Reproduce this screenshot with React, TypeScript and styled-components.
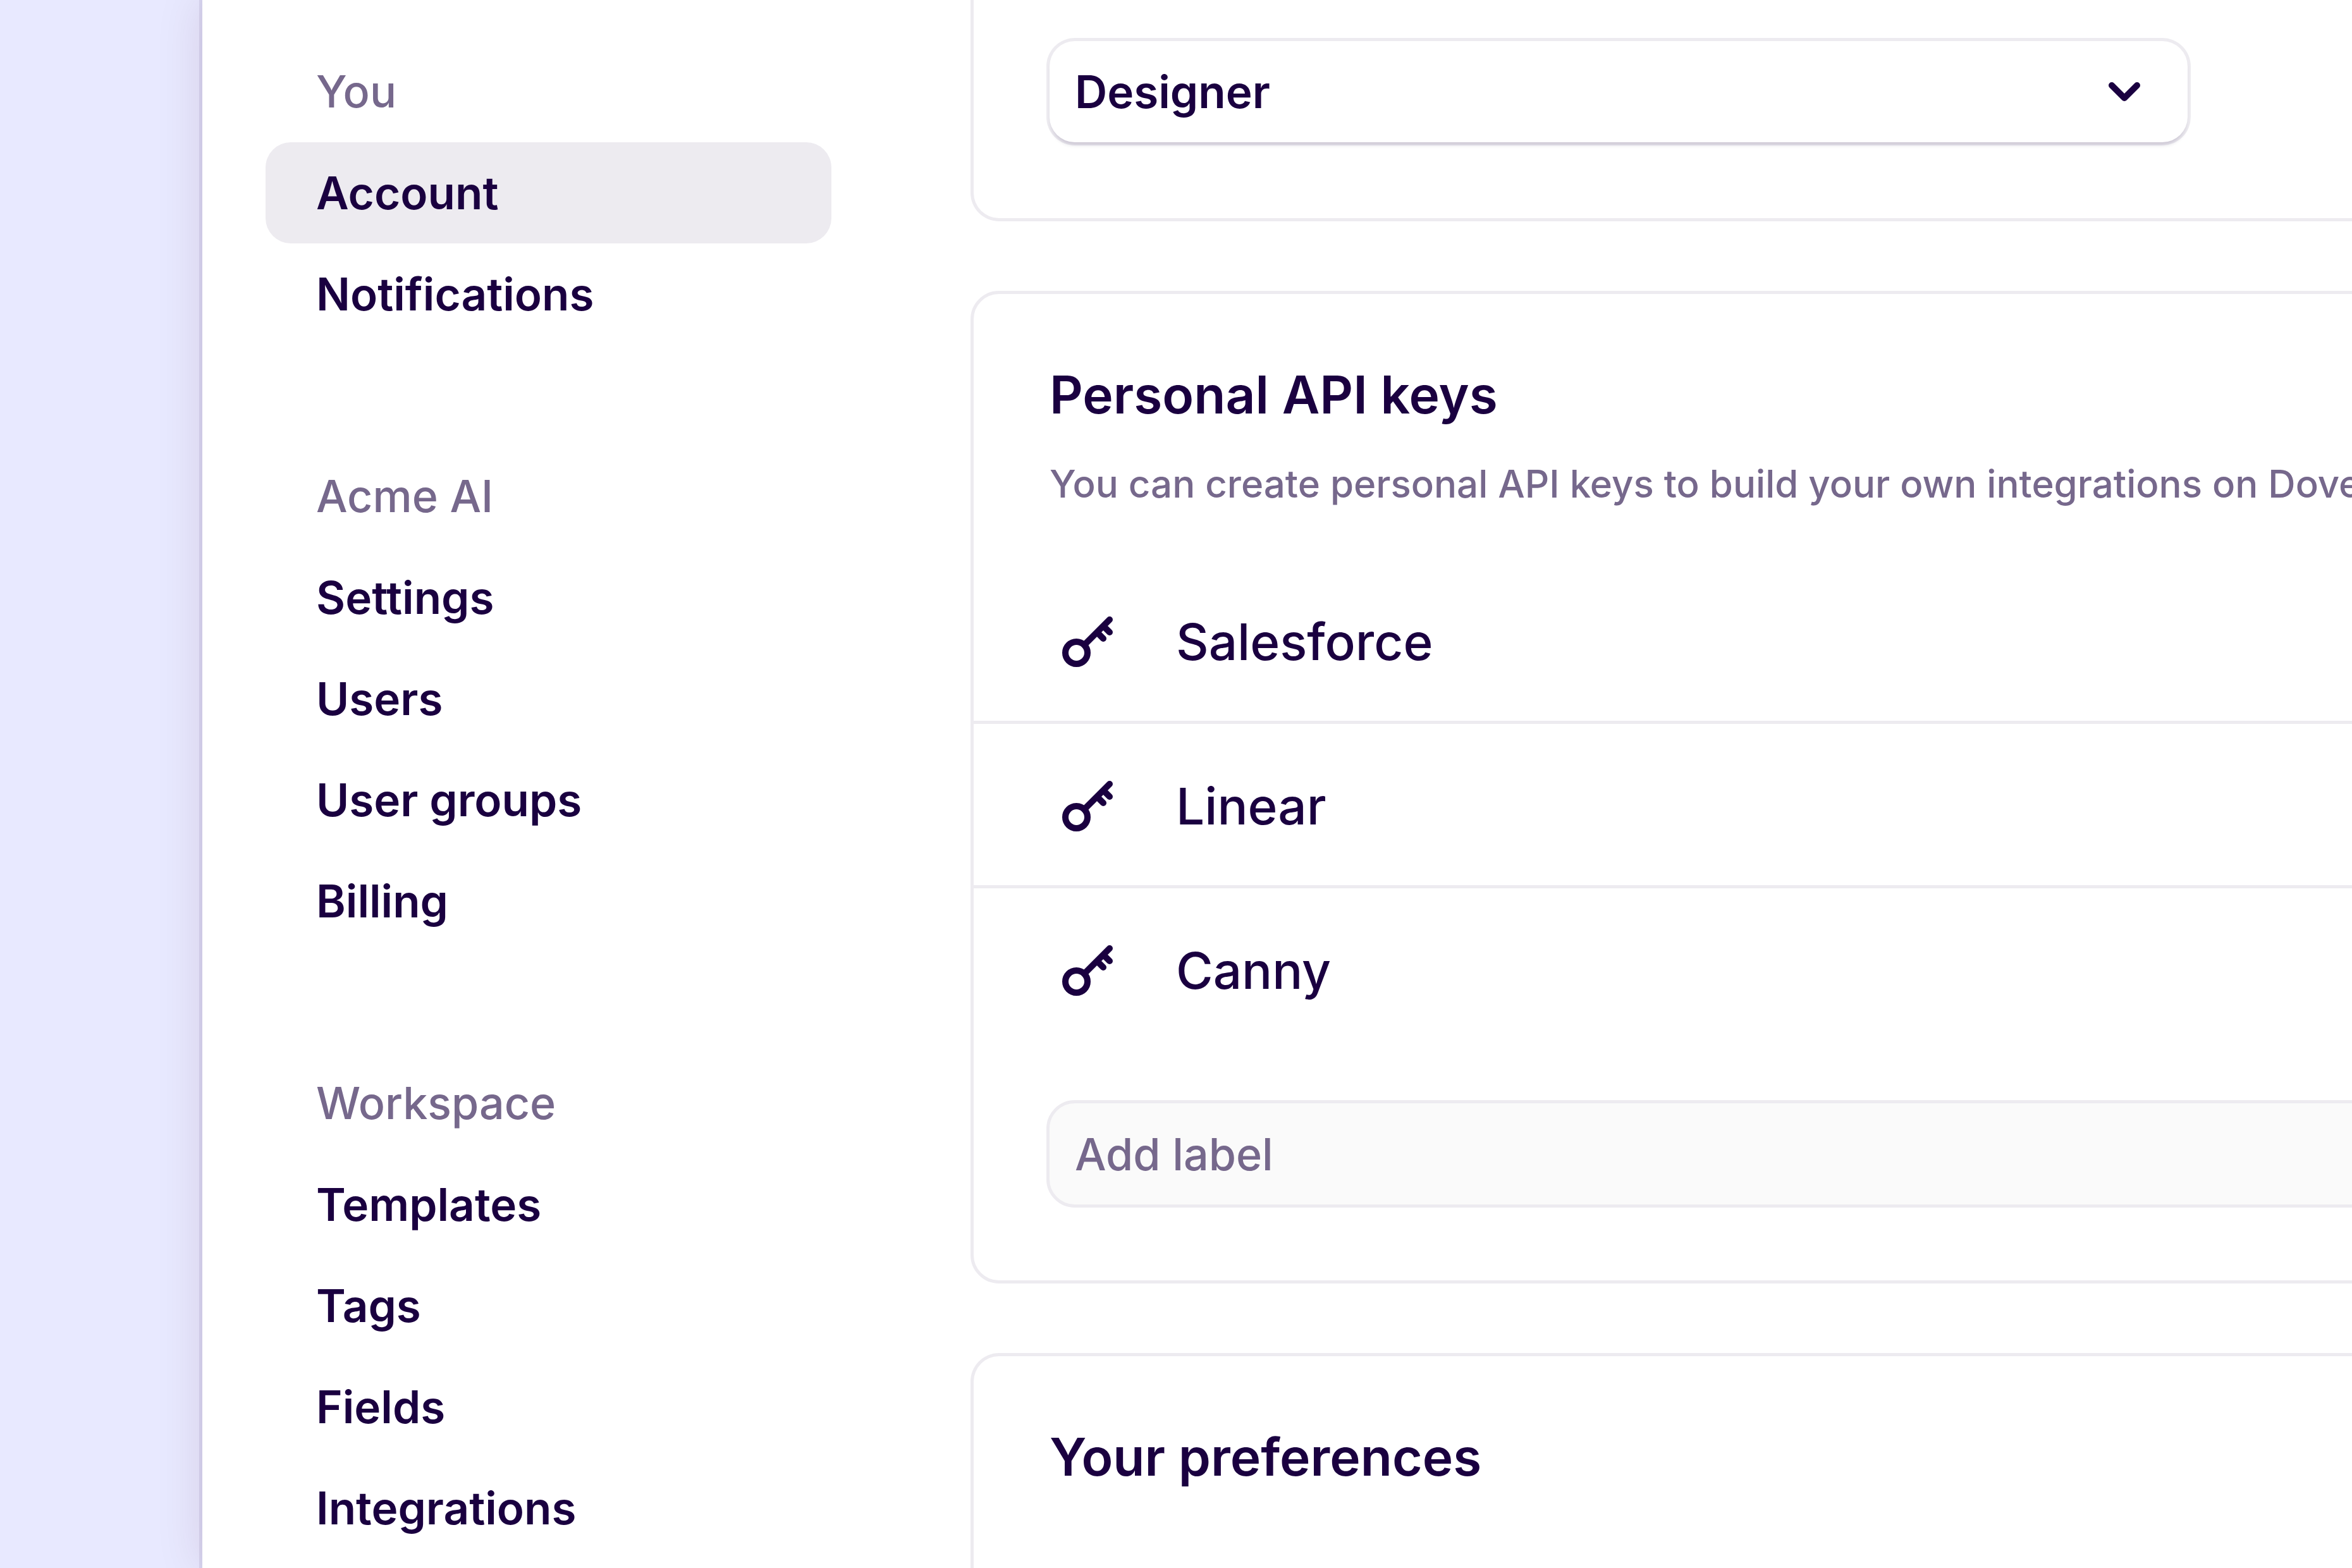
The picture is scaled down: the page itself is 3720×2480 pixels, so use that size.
import React from "react";
import styled, { createGlobalStyle } from "styled-components";

const GlobalStyle = createGlobalStyle`
  *, *::before, *::after { box-sizing: border-box; }
  html, body { margin: 0; height: 100%; overflow: hidden; }
  #root { height: 100%; }
  body {
    background: #e8e9ff;
    color: #1a0040;
    font-family: Inter, "Liberation Sans", sans-serif;
    font-optical-sizing: none;
    font-size: 70px;
    line-height: 100px;
    -webkit-font-smoothing: antialiased;
  }
`;

const Shell = styled.div`
  display: flex;
  height: 100%;
  padding-left: 320px;
  overflow: hidden;
`;

const Window = styled.div`
  flex: 1;
  min-width: 0;
  display: flex;
  gap: 220px;
  padding-left: 100px;
  background: #ffffff;
  box-shadow: 0 0 0 5px rgba(26, 0, 80, 0.08), 0 0 70px rgba(80, 0, 40, 0.12);
`;

const Sidebar = styled.nav`
  flex: none;
  width: 895px;
  display: flex;
  flex-direction: column;
  gap: 160px;
  padding-top: 65px;
`;

const NavGroup = styled.section`
  display: flex;
  flex-direction: column;
`;

const NavTitle = styled.h2`
  margin: 0;
  padding: 30px 80px;
  font-size: 70px;
  font-weight: 500;
  color: #76688c;
`;

const NavLink = styled.a<{ $active?: boolean }>`
  padding: 30px 80px;
  border-radius: 40px;
  background: ${({ $active }) => ($active ? "#edebf0" : "transparent")};
  font-size: 71px;
  font-weight: 600;
  color: inherit;
  text-decoration: none;
`;

const Content = styled.main`
  flex: 1 0 3000px;
  display: flex;
  flex-direction: column;
  gap: 110px;
`;

const Card = styled.section`
  display: flex;
  flex-direction: column;
  padding: 110px 0 115px;
  border: 5px solid #edebf0;
  border-radius: 45px;
`;

const UpperCard = styled(Card)`
  padding-top: 60px;
  border-top: none;
  border-radius: 0 0 45px 45px;
`;

const LowerCard = styled(Card)`
  flex: 1;
  border-bottom: none;
  border-radius: 45px 45px 0 0;
`;

const CardHeader = styled.header`
  display: flex;
  flex-direction: column;
  gap: 40px;
  padding: 0 120px;
`;

const CardTitle = styled.h3`
  margin: 0;
  font-size: 82px;
  font-weight: 600;
`;

const CardText = styled.p`
  margin: 0;
  font-size: 60px;
  font-weight: 500;
  color: #76688c;
  white-space: nowrap;
`;

const RoleField = styled.div`
  display: grid;
  align-items: center;
  width: 1800px;
  margin: 5px 120px;
`;

const RoleSelect = styled.select`
  grid-area: 1 / 1;
  appearance: none;
  width: 100%;
  height: 160px;
  padding: 0 40px;
  border: none;
  border-radius: 40px;
  background: #ffffff;
  box-shadow: 0 0 0 5px rgba(26, 0, 64, 0.08), 0 7px 6px -3px rgba(26, 0, 64, 0.16);
  color: inherit;
  font-family: inherit;
  font-optical-sizing: none;
  font-size: 71px;
  font-weight: 600;
`;

const Chevron = styled.svg`
  grid-area: 1 / 1;
  justify-self: end;
  width: 80px;
  height: 80px;
  margin-right: 60px;
  pointer-events: none;
`;

const KeyList = styled.ul`
  margin: 70px 0 0;
  padding: 0;
  list-style: none;
`;

const KeyRow = styled.li`
  display: flex;
  align-items: center;
  gap: 80px;
  height: 260px;
  padding: 0 120px;
  font-size: 80px;
  font-weight: 500;

  &:not(:last-child) {
    box-shadow: inset 0 -5px #edebf0;
  }
`;

const KeyGlyph = styled.svg`
  flex: none;
  width: 120px;
  height: 120px;
`;

const LabelInput = styled.input`
  height: 170px;
  margin: 75px 115px 0;
  padding: 0 40px;
  border: 5px solid #edebf0;
  border-radius: 45px;
  background: #fafafa;
  color: inherit;
  font-family: inherit;
  font-optical-sizing: none;
  font-size: 70px;
  font-weight: 500;

  &::placeholder {
    color: #76688c;
    opacity: 1;
  }
`;

const groups = [
  { title: "You", links: ["Account", "Notifications"] },
  { title: "Acme AI", links: ["Settings", "Users", "User groups", "Billing"] },
  { title: "Workspace", links: ["Templates", "Tags", "Fields", "Integrations"] },
];

const keys = ["Salesforce", "Linear", "Canny"];

function KeyIcon() {
  return (
    <KeyGlyph viewBox="0 0 24 24" fill="none" stroke="currentColor" strokeWidth="2" strokeLinecap="round" strokeLinejoin="round" aria-hidden="true">
      <circle cx="8.5" cy="15.5" r="3.5" />
      <path d="M11 13l8-8M15 9l2 2M17 7l2 2" />
    </KeyGlyph>
  );
}

export default function App() {
  return (
    <>
      <GlobalStyle />
      <Shell>
        <Window>
          <Sidebar aria-label="Settings">
            {groups.map((group) => (
              <NavGroup key={group.title}>
                <NavTitle>{group.title}</NavTitle>
                {group.links.map((link) => (
                  <NavLink key={link} href="#" $active={link === "Account"} aria-current={link === "Account" ? "page" : undefined}>
                    {link}
                  </NavLink>
                ))}
              </NavGroup>
            ))}
          </Sidebar>
          <Content>
            <UpperCard>
              <RoleField>
                <RoleSelect aria-label="Role" defaultValue="Designer">
                  <option>Designer</option>
                </RoleSelect>
                <Chevron viewBox="0 0 16 16" fill="none" stroke="currentColor" strokeWidth="2" strokeLinecap="round" strokeLinejoin="round" aria-hidden="true">
                  <path d="M4 6l4 4 4-4" />
                </Chevron>
              </RoleField>
            </UpperCard>
            <Card>
              <CardHeader>
                <CardTitle>Personal API keys</CardTitle>
                <CardText>You can create personal API keys to build your own integrations on Dovetail.</CardText>
              </CardHeader>
              <KeyList>
                {keys.map((name) => (
                  <KeyRow key={name}>
                    <KeyIcon />
                    {name}
                  </KeyRow>
                ))}
              </KeyList>
              <LabelInput aria-label="Label" placeholder="Add label" />
            </Card>
            <LowerCard>
              <CardHeader>
                <CardTitle>Your preferences</CardTitle>
              </CardHeader>
            </LowerCard>
          </Content>
        </Window>
      </Shell>
    </>
  );
}
